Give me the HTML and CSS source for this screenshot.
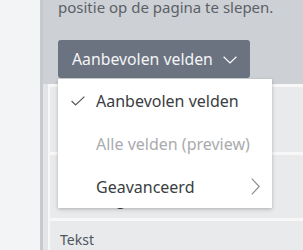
FILE: index.html
```html
<!DOCTYPE html>
<html>
<head>
<meta charset="utf-8">
<link rel="stylesheet" href="styles.css">
</head>
<body>
<div class="app">
  <aside class="side"></aside>
  <main class="main">
    <section class="head">
      <p class="intro">positie op de pagina te slepen.</p>
      <div class="picker">
        <button class="btn">
          <span>Aanbevolen velden</span>
          <svg class="chev" width="14" height="8" viewBox="0 0 14 8"><path d="M0.6 0.8 L7 7 L13.4 0.8" fill="none" stroke="#ffffff" stroke-width="1.2"/></svg>
        </button>
        <ul class="menu">
          <li class="item">
            <svg class="check" width="14" height="10" viewBox="0 0 14 10"><path d="M0.6 5 L4.6 9 L13.4 0.6" fill="none" stroke="#555a60" stroke-width="1.2"/></svg>
            <span>Aanbevolen velden</span>
          </li>
          <li class="item disabled"><span>Alle velden (preview)</span></li>
          <li class="item">
            <span>Geavanceerd</span>
            <svg class="arrow" width="9" height="17" viewBox="0 0 9 17"><path d="M0.8 0.6 L8.2 8.5 L0.8 16.4" fill="none" stroke="#8a8d91" stroke-width="1.2"/></svg>
          </li>
        </ul>
      </div>
    </section>
    <section class="list">
      <div class="cards">
        <div class="card c1"></div>
        <div class="card c2"><span class="under">Achtergrond</span></div>
        <div class="card c3"><span class="label">Tekst</span></div>
      </div>
    </section>
  </main>
</div>
</body>
</html>
```
FILE: styles.css
```css
* { box-sizing: border-box; }
html, body { margin: 0; padding: 0; }
body {
  width: 303px;
  height: 250px;
  overflow: hidden;
  font-family: "Noto Sans", "Open Sans", sans-serif;
}
.app {
  display: flex;
  height: 250px;
}
.side {
  width: 43px;
  flex: none;
  background: #f3f4f6;
  border-right: 3px solid #c6c9cd;
}
.main {
  flex: 1;
  display: flex;
  flex-direction: column;
  background: #cdd0d4;
}
.head {
  height: 88px;
  padding: 0 0 0 15px;
  position: relative;
}
.intro {
  margin: -4px 0 0 0;
  font-size: 15px;
  line-height: 22px;
  color: #5b6068;
  white-space: nowrap;
}
.picker {
  position: relative;
  margin-top: 22px;
  width: 214px;
}
.btn {
  display: flex;
  align-items: center;
  gap: 10px;
  height: 38px;
  width: 192px;
  padding: 0 0 0 14px;
  background: #6b7280;
  border: none;
  border-radius: 3px;
  color: #f4f5f7;
  font-family: inherit;
  font-size: 15.8px;
  white-space: nowrap;
}
.chev { margin-top: 1px; flex: none; }
.menu {
  position: absolute;
  z-index: 2;
  left: 0;
  top: 39px;
  width: 214px;
  margin: 0;
  padding: 0;
  list-style: none;
  background: #ffffff;
  box-shadow: 0 1px 3px rgba(0,0,0,0.18), 0 2px 6px rgba(0,0,0,0.08);
}
.item {
  position: relative;
  display: flex;
  align-items: center;
  height: 43px;
  padding-left: 38px;
  font-size: 16px;
  color: #3a3d41;
  white-space: nowrap;
}
.item.disabled { color: #a9abae; }
.check {
  position: absolute;
  left: 13px;
  top: 17px;
}
.arrow {
  position: absolute;
  left: 193px;
  top: 13px;
}
.list {
  flex: 1;
  background: #e3e4e6;
  padding-left: 5px;
}
.cards {
  height: 100%;
  background: #f7f7f8;
  padding: 3px 0 0 2px;
  display: flex;
  flex-direction: column;
  gap: 3px;
}
.card {
  background: #e9eaec;
}
.c1 { height: 65px; flex: none; }
.c2 { height: 63px; flex: none; position: relative; }
.c3 { flex: 1; padding: 7px 0 0 10px; }
.under {
  position: absolute;
  left: 17px;
  top: 33px;
  font-size: 16px;
  line-height: 22px;
  color: #3a3d41;
  white-space: nowrap;
}
.label {
  font-size: 14px;
  color: #50555c;
}
```
